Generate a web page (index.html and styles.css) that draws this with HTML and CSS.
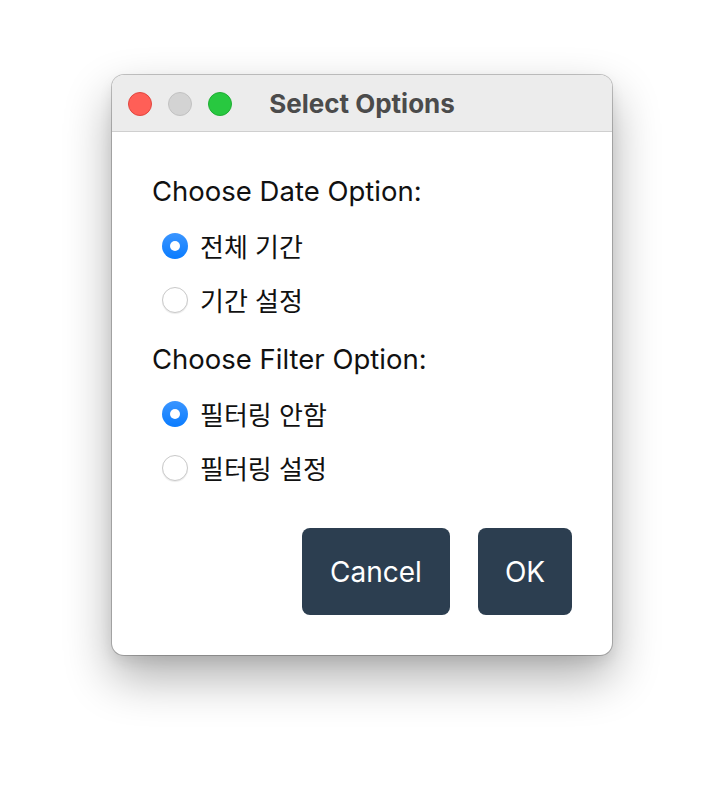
FILE: index.html
```
<!DOCTYPE html>
<html lang="ko">
<head>
<meta charset="utf-8">
<title>Select Options</title>
<link rel="stylesheet" href="styles.css">
</head>
<body>
<div class="stage">
  <div class="window">
    <div class="titlebar">
      <div class="lights">
        <span class="light red"></span>
        <span class="light gray"></span>
        <span class="light green"></span>
      </div>
      <div class="title">Select Options</div>
    </div>
    <div class="content">
      <div class="group">
        <div class="label">Choose Date Option:</div>
        <label class="option"><span class="radio on"></span><span class="ko">전체 기간</span></label>
        <label class="option"><span class="radio"></span><span class="ko">기간 설정</span></label>
      </div>
      <div class="group second">
        <div class="label">Choose Filter Option:</div>
        <label class="option"><span class="radio on"></span><span class="ko">필터링 안함</span></label>
        <label class="option"><span class="radio"></span><span class="ko">필터링 설정</span></label>
      </div>
      <div class="buttons">
        <button class="btn cancel">Cancel</button>
        <button class="btn ok">OK</button>
      </div>
    </div>
  </div>
</div>
</body>
</html>
```
FILE: styles.css
```
html, body {
  margin: 0;
  padding: 0;
  background: #ffffff;
}
.stage {
  width: 724px;
  height: 804px;
  display: flex;
  justify-content: center;
  align-items: flex-start;
  padding-top: 75px;
  box-sizing: border-box;
  font-family: Inter, "Noto Sans", "Noto Sans CJK KR", sans-serif;
}
.window {
  width: 500px;
  height: 580px;
  border-radius: 12px;
  background: #ffffff;
  box-shadow: 0 0 0 1px rgba(0,0,0,0.22), 0 22px 48px rgba(0,0,0,0.32), 0 6px 14px rgba(0,0,0,0.08);
  overflow: hidden;
  display: flex;
  flex-direction: column;
}
.titlebar {
  height: 56px;
  flex: none;
  background: #ececec;
  border-bottom: 1px solid #cfcfcf;
  display: flex;
  align-items: center;
  position: relative;
}
.lights {
  display: flex;
  gap: 16px;
  padding-left: 16px;
  padding-top: 1px;
}
.light {
  width: 22px;
  height: 22px;
  border-radius: 50%;
  display: block;
}
.red { background: #ff5f57; border: 1px solid #e2463f; }
.gray { background: #d3d3d3; border: 1px solid #c2c2c2; }
.green { background: #28c840; border: 1px solid #1fae33; }
.title {
  position: absolute;
  left: 0;
  right: 0;
  top: 0;
  bottom: 0;
  display: flex;
  align-items: center;
  justify-content: center;
  font-weight: 700;
  font-size: 26px;
  color: #4b4b4b;
  pointer-events: none;
}
.content {
  padding: 31px 40px 40px 40px;
  display: flex;
  flex-direction: column;
}
.group {
  display: flex;
  flex-direction: column;
}
.group.second {
  margin-top: 4px;
}
.label {
  height: 56px;
  display: flex;
  align-items: center;
  font-size: 27.5px;
  color: #111111;
}
.option {
  height: 54px;
  display: flex;
  align-items: center;
  gap: 12px;
  padding-left: 10px;
}
.radio {
  width: 26px;
  height: 26px;
  border-radius: 50%;
  box-sizing: border-box;
  border: 1px solid #c9c9c9;
  background: #ffffff;
  box-shadow: 0 1px 1px rgba(0,0,0,0.08);
  flex: none;
  display: flex;
  align-items: center;
  justify-content: center;
}
.radio.on {
  border: none;
  background: linear-gradient(#3a95ff, #0a7cff);
  box-shadow: none;
}
.radio.on::after {
  content: "";
  width: 10px;
  height: 10px;
  border-radius: 50%;
  background: #ffffff;
}
.ko {
  font-family: "Noto Sans CJK KR", sans-serif;
  font-size: 26px;
  color: #111111;
  line-height: 1;
}
.buttons {
  margin-top: 33px;
  display: flex;
  justify-content: flex-end;
  gap: 28px;
}
.btn {
  height: 87px;
  border: none;
  border-radius: 8px;
  background: #2c3e50;
  color: #ffffff;
  font-family: Inter, "Noto Sans", sans-serif;
  font-size: 28px;
  padding: 0;
}
.cancel { width: 148px; }
.ok { width: 94px; }
```
